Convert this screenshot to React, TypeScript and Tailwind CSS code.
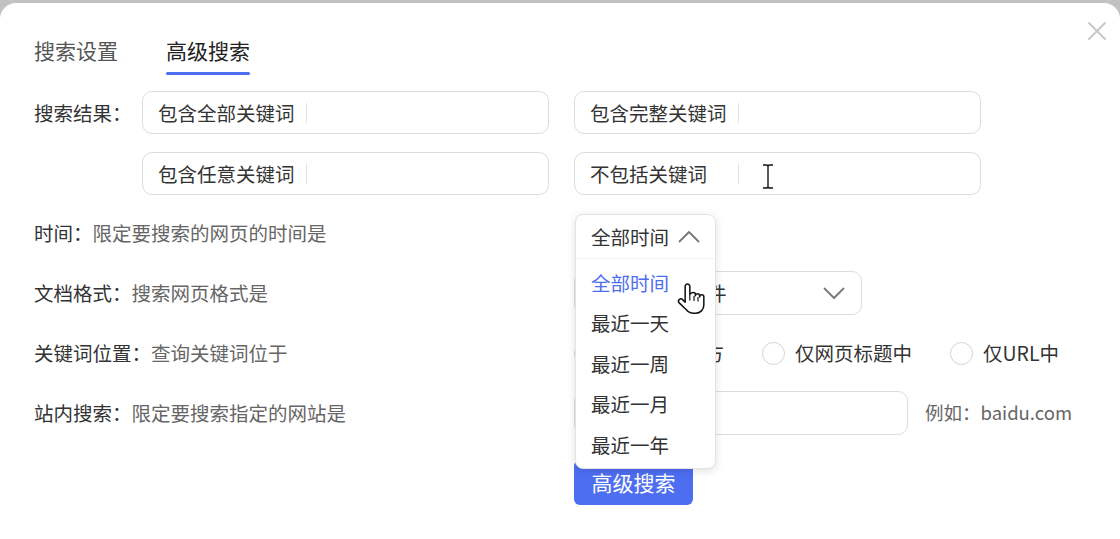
const FONT = { fontFamily: '"Noto Sans CJK SC", "Noto Sans", sans-serif' };

function TextBox({ text }: { text: string }) {
  return (
    <div className="flex h-[43px] w-[407px] items-center rounded-[10px] border border-[#dcdcdc] bg-white pl-[15px]">
      <span className="w-[148px] text-[#333]">{text}</span>
      <span className="h-[20px] w-px bg-[#e2e2e2]" />
    </div>
  );
}

function Radio({ label, className = '' }: { label: string; className?: string }) {
  return (
    <div className={`flex items-center gap-[10px] ${className}`}>
      <span className="h-[23px] w-[23px] rounded-full border-[1.5px] border-[#d4d4d4] bg-white" />
      <span className="text-[#333]">{label}</span>
    </div>
  );
}

function Chevron({ up }: { up?: boolean }) {
  return (
    <svg width="22" height="13" viewBox="0 0 22 13" fill="none" stroke="#777" strokeWidth="1.8" strokeLinecap="round" strokeLinejoin="round">
      <path d={up ? 'M1.5 11.5 11 2l9.5 9.5' : 'M1.5 1.5 11 11l9.5-9.5'} />
    </svg>
  );
}

function HandCursor() {
  return (
    <svg width="28" height="38" viewBox="0 0 24 32" className="pointer-events-none absolute left-[677px] top-[279px]">
      <path
        d="M9 1.5c-1.1 0-2 .9-2 2V17l-2.2-2.2c-.8-.8-2.1-.8-2.9 0-.8.8-.8 2 0 2.8L8 23.5c1.6 1.9 3.9 3 6.4 3H16c4 0 7-3.1 7-7V12.5c0-1-.8-1.8-1.8-1.8s-1.8.8-1.8 1.8V11.5c0-1-.8-1.8-1.8-1.8s-1.8.8-1.8 1.8V10.5c0-1-.8-1.8-1.8-1.8S11 9.5 11 10.5V3.5c0-1.1-.9-2-2-2z"
        fill="#fff"
        stroke="#111"
        strokeWidth="1.3"
        strokeLinejoin="round"
      />
      <path d="M11 10.5v5M14.6 11.5v4.5M18 12.5v4" stroke="#111" strokeWidth="1" />
    </svg>
  );
}

function IBeam() {
  return (
    <svg width="12" height="25" viewBox="0 0 12 25" className="pointer-events-none absolute left-[762px] top-[161px]">
      <path d="M1 1h3.5c.8 0 1.5.5 1.5 1.5v20c0 1-.7 1.5-1.5 1.5H1M11 1H7.5C6.7 1 6 1.5 6 2.5M11 24H7.5C6.7 24 6 23.5 6 22.5" fill="none" stroke="#111" strokeWidth="1.4" />
    </svg>
  );
}

const TIMES = ['全部时间', '最近一天', '最近一周', '最近一月', '最近一年'];

export default function App() {
  return (
    <div className="h-[539px] w-[1120px] overflow-hidden bg-[#c2c2c2] pt-[3px] text-[19.5px]" style={FONT}>
      <div className="relative h-full rounded-t-[16px] bg-white pl-[34px] pt-[33px]">
        <svg width="20" height="20" viewBox="0 0 20 20" className="absolute right-[13px] top-[18px]" stroke="#c8c8c8" strokeWidth="2" strokeLinecap="round">
          <path d="M2 2l16 16M18 2 2 18" />
        </svg>

        {/* tabs */}
        <div className="flex gap-[48px] text-[21px] leading-[28px]">
          <span className="text-[#555]">搜索设置</span>
          <div className="flex flex-col">
            <span className="text-[#222]">高级搜索</span>
            <span className="mt-[8px] h-[3px] rounded-full bg-[#4e6ef2]" />
          </div>
        </div>

        {/* keyword inputs */}
        <div className="mt-[16px] flex flex-col gap-[18px]">
          <div className="flex items-center">
            <span className="w-[108px] text-[#333]">搜索结果：</span>
            <div className="flex gap-[25px]">
              <TextBox text="包含全部关键词" />
              <TextBox text="包含完整关键词" />
            </div>
          </div>
          <div className="flex items-center pl-[108px]">
            <div className="flex gap-[25px]">
              <TextBox text="包含任意关键词" />
              <TextBox text="不包括关键词" />
            </div>
          </div>
        </div>

        <div className="mt-[8px] flex flex-col">
          <div className="flex h-[60px] items-center">
            <span className="w-[540px] text-[#333]">
              时间：<span className="text-[#666]">限定要搜索的网页的时间是</span>
            </span>
          </div>

          <div className="flex h-[60px] items-center">
            <span className="w-[540px] text-[#333]">
              文档格式：<span className="text-[#666]">搜索网页格式是</span>
            </span>
            <div className="flex h-[44px] w-[288px] items-center justify-between rounded-[10px] border border-[#dcdcdc] pl-[15px] pr-[16px]">
              <span className="text-[#333]">所有网页和文件</span>
              <Chevron />
            </div>
          </div>

          <div className="flex h-[60px] items-center">
            <span className="w-[540px] text-[#333]">
              关键词位置：<span className="text-[#666]">查询关键词位于</span>
            </span>
            <div className="flex items-center">
              <Radio label="网页任何地方" />
              <Radio label="仅网页标题中" className="ml-[38px]" />
              <Radio label="仅URL中" className="ml-[38px]" />
            </div>
          </div>

          <div className="flex h-[60px] items-center">
            <span className="w-[540px] text-[#333]">
              站内搜索：<span className="text-[#666]">限定要搜索指定的网站是</span>
            </span>
            <div className="h-[44px] w-[334px] rounded-[10px] border border-[#dcdcdc]" />
            <span className="ml-[17px] text-[18.5px] text-[#666]">例如：baidu.com</span>
          </div>
        </div>

        <div className="mt-[17px] pl-[540px]">
          <button className="h-[45px] w-[119px] rounded-[6px] bg-[#4e6ef2] text-[21px] text-white">高级搜索</button>
        </div>

        {/* open time dropdown */}
        <div className="absolute left-[575px] top-[211px] h-[255px] w-[141px] rounded-[8px] border border-[#e4e4e4] bg-white shadow-[0_2px_8px_rgba(0,0,0,0.12)]">
          <div className="flex h-[44px] items-center justify-between border-b border-[#f2f2f2] pl-[15px] pr-[15px]">
            <span className="text-[#333]">全部时间</span>
            <Chevron up />
          </div>
          <div className="flex flex-col pt-[3px]">
            {TIMES.map((t, i) => (
              <div key={t} className={`flex h-[40.5px] items-center pl-[15px] ${i === 0 ? 'text-[#4e6ef2]' : 'text-[#333]'}`}>
                {t}
              </div>
            ))}
          </div>
        </div>

        <IBeam />
        <HandCursor />
      </div>
    </div>
  );
}
